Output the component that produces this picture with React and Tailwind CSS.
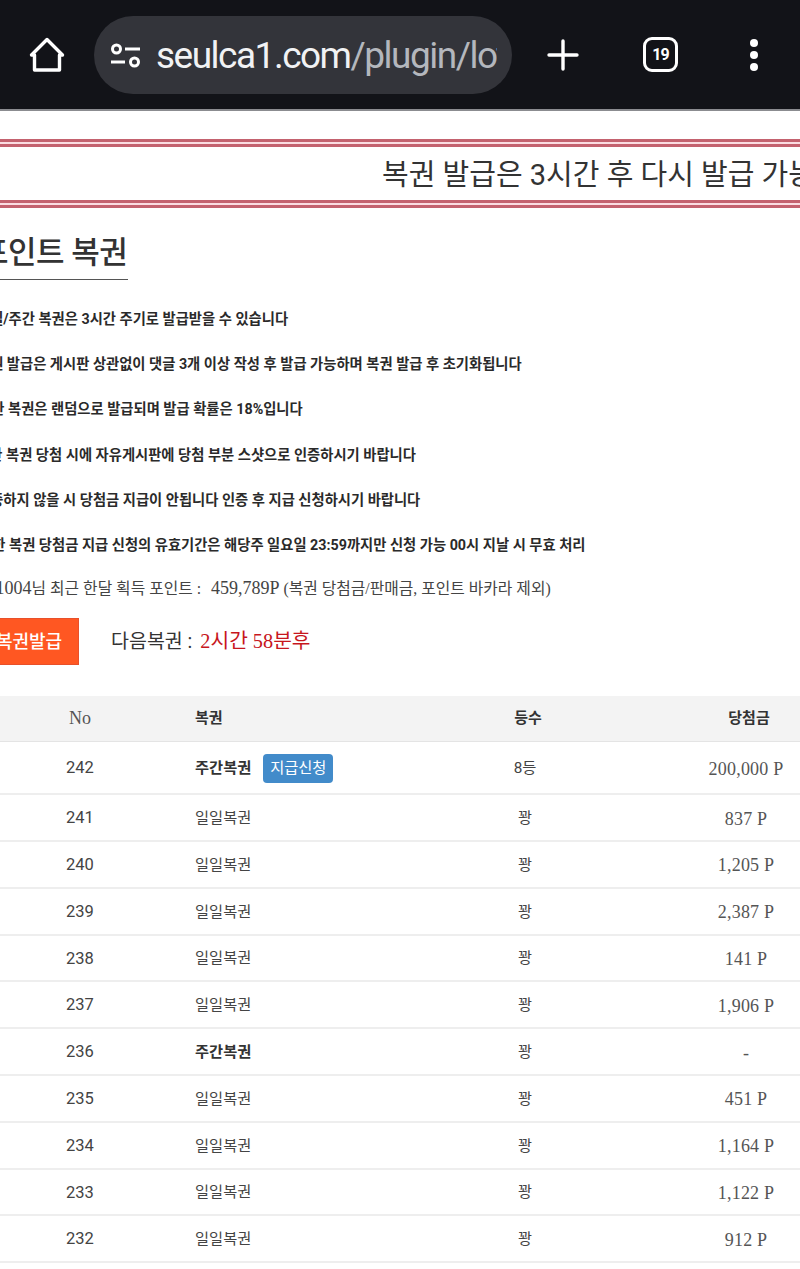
import React from "react";

const sans = "font-['Roboto','Noto_Sans_CJK_KR',sans-serif]";
const serif = "font-['Liberation_Serif','Noto_Sans_CJK_KR',serif]";

const notices = [
  { text: "일일/주간 복권은 3시간 주기로 발급받을 수 있습니다", offset: "-ml-[23px]" },
  { text: "복권 발급은 게시판 상관없이 댓글 3개 이상 작성 후 발급 가능하며 복권 발급 후 초기화됩니다", offset: "-ml-[23px]" },
  { text: "발급한 복권은 랜덤으로 발급되며 발급 확률은 18%입니다", offset: "-ml-[35px]" },
  { text: "발급한 복권 당첨 시에 자유게시판에 당첨 부분 스샷으로 인증하시기 바랍니다", offset: "-ml-[37px]" },
  { text: "인증하지 않을 시 당첨금 지급이 안됩니다 인증 후 지급 신청하시기 바랍니다", offset: "-ml-[23px]" },
  { text: "발급한 복권 당첨금 지급 신청의 유효기간은 해당주 일요일 23:59까지만 신청 가능 00시 지날 시 무효 처리", offset: "-ml-[34px]" },
];

const rows = [
  { no: 241, name: "일일복권", prize: "837 P" },
  { no: 240, name: "일일복권", prize: "1,205 P" },
  { no: 239, name: "일일복권", prize: "2,387 P" },
  { no: 238, name: "일일복권", prize: "141 P" },
  { no: 237, name: "일일복권", prize: "1,906 P" },
  { no: 236, name: "주간복권", prize: "-", bold: true },
  { no: 235, name: "일일복권", prize: "451 P" },
  { no: 234, name: "일일복권", prize: "1,164 P" },
  { no: 233, name: "일일복권", prize: "1,122 P" },
  { no: 232, name: "일일복권", prize: "912 P" },
];

const gridCols = "grid grid-cols-[160px_310px_116px_320px] w-[906px] items-center";

const Toolbar = () => (
  <div className="flex items-center h-[111px] bg-[#121318] border-b-2 border-[#8b8c90] shrink-0">
    {/* 홈 아이콘 */}
    <svg className="ml-[28px] w-[38px] h-[38px]" viewBox="0 0 38 38" fill="none" stroke="white" strokeWidth="3.4" strokeLinejoin="round">
      <path d="M19 3.5 L34.5 19 H31.5 V34 H6.5 V19 H3.5 Z" />
    </svg>
    <div className="ml-[28px] flex items-center w-[418px] h-[78px] rounded-[39px] bg-[#33343a] overflow-hidden">
      <svg className="ml-[16px] w-[32px] h-[28px] shrink-0" viewBox="0 0 32 28" fill="none" stroke="white" strokeWidth="3">
        <circle cx="6.5" cy="8" r="4" />
        <path d="M15 8 H30" />
        <path d="M1 21 H15" />
        <circle cx="24.5" cy="21" r="4" />
      </svg>
      <div className={`ml-[14px] pt-[2px] whitespace-nowrap text-[37px] tracking-[-1.5px] ${sans} w-[341px] overflow-hidden`}>
        <span className="text-[#f1f2f4]">seulca1.com</span>
        <span className="text-[#b4b7bd]">/plugin/lottery</span>
      </div>
    </div>
    <svg className="ml-[35px] w-[32px] h-[32px]" viewBox="0 0 32 32" stroke="white" strokeWidth="3.4" strokeLinecap="round">
      <path d="M16 2 V30 M2 16 H30" />
    </svg>
    <div className={`ml-[64px] flex items-center justify-center w-[35px] h-[35px] rounded-[9px] border-[3.5px] border-white text-white text-[16px] font-bold tracking-[-1px] ${sans}`}>
      19
    </div>
    <div className="ml-[72px] flex flex-col gap-[4px]">
      <div className="w-[8px] h-[8px] rounded-full bg-white" />
      <div className="w-[8px] h-[8px] rounded-full bg-white" />
      <div className="w-[8px] h-[8px] rounded-full bg-white" />
    </div>
  </div>
);

// 분홍빛이 도는 붉은 겹줄
const RedBand = () => <div className="h-[8px] border-y-[3px] border-[#c4626f] bg-[#fbdde2]" />;

export default function App() {
  return (
    <div className={`w-[800px] h-[1269px] overflow-hidden bg-white text-[#333] ${sans}`}>
      <Toolbar />

      {/* 안내 띠 */}
      <div className="mt-[28px]">
        <RedBand />
        <div className="h-[53px] pt-[5px] flex items-center whitespace-nowrap">
          <span className="ml-[382px] text-[29px] text-[#333]">복권 발급은 3시간 후 다시 발급 가능합니다</span>
        </div>
        <RedBand />
      </div>

      {/* 제목 */}
      <div className="-ml-[20px] mt-[22px] w-[148px] h-[50px] border-b border-[#555] whitespace-nowrap">
        <span className="text-[31px] font-medium leading-[45px] tracking-[-0.5px] text-[#333]">포인트 복권</span>
      </div>

      {/* 안내 문구 */}
      <div className="mt-[17px] flex flex-col whitespace-nowrap">
        {notices.map((item) => (
          <div key={item.text} className={`h-[45.2px] leading-[45px] text-[14.3px] font-bold text-[#2a2a2a] ${item.offset}`}>
            {item.text}
          </div>
        ))}
      </div>

      <div className={`-ml-[48px] mt-[2px] h-[36px] leading-[36px] text-[15.8px] text-[#444] whitespace-nowrap ${serif}`}>
        테스터<span className="text-[18px]">1004</span>님 최근 한달 획득 포인트 : <span className="ml-[6px] text-[18px]">459,789P</span> (복권 당첨금/판매금, 포인트 바카라 제외)
      </div>

      {/* 발급 버튼 */}
      <div className="mt-[12px] flex items-center whitespace-nowrap">
        <div className="-ml-[25px] w-[104px] h-[47px] pl-[4px] flex items-center justify-center bg-[#ff5722] border border-[#e8502a] text-white text-[18px] font-medium">
          복권발급
        </div>
        <span className="ml-[32px] text-[19.5px] text-[#333]">다음복권 :</span>
        <span className={`ml-[8px] text-[20.3px] text-[#c7161d] ${serif}`}>2시간 58분후</span>
      </div>

      {/* 복권 테이블 */}
      <div className="mt-[31px]">
        <div className={`${gridCols} h-[46px] bg-[#f3f3f3] border-b border-[#e4e4e4] text-[15px] font-bold text-[#333]`}>
          <div className={`text-center text-[18px] font-normal text-[#555] ${serif}`}>No</div>
          <div className="pl-[35px]">복권</div>
          <div className="text-center">등수</div>
          <div className="text-center pl-[6px]">당첨금</div>
        </div>
        <div className={`${gridCols} h-[53px] pt-[2px] border-b-2 border-[#eeeeee] text-[16.5px] text-[#444]`}>
          <div className="text-center">242</div>
          <div className="pl-[35px] flex items-center gap-[12px]">
            <span className="text-[15.3px] font-bold text-[#333]">주간복권</span>
            <span className="flex items-center justify-center w-[70px] h-[29px] rounded-[4px] bg-[#428bca] text-white text-[15.3px]">지급신청</span>
          </div>
          <div className="text-center pr-[6px] text-[15.3px]">8등</div>
          <div className={`text-center text-[18px] leading-[24px] tracking-[0.2px] text-[#555] ${serif}`}>200,000 P</div>
        </div>
        {rows.map((row) => (
          <div key={row.no} className={`${gridCols} h-[46.8px] pt-[2px] border-b-2 border-[#eeeeee] text-[16.5px] text-[#444]`}>
            <div className="text-center">{row.no}</div>
            <div className={`pl-[35px] text-[15.3px] ${row.bold ? "font-bold text-[#333]" : ""}`}>{row.name}</div>
            <div className="text-center pr-[6px] text-[15.3px]">꽝</div>
            <div className={`text-center text-[18px] leading-[24px] tracking-[0.2px] text-[#555] ${serif}`}>{row.prize}</div>
          </div>
        ))}
      </div>
    </div>
  );
}
